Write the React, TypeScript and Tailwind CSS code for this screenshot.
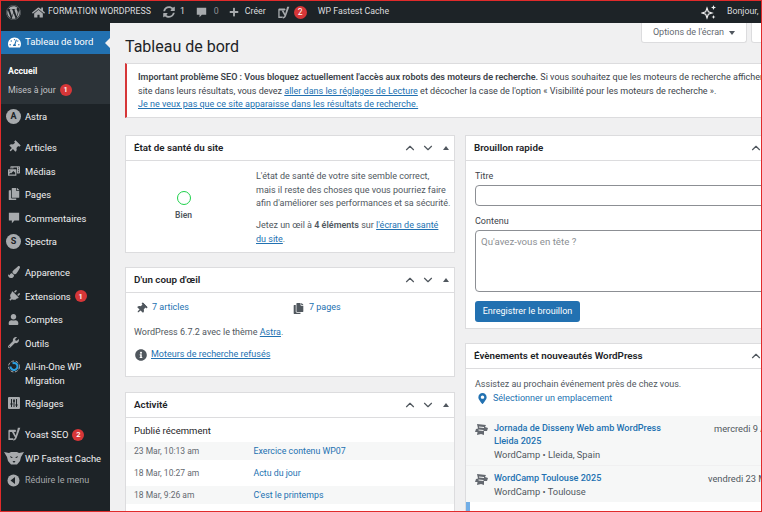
import React from 'react';
import {
  FaWordpress, FaHome, FaSyncAlt, FaPlus, FaTachometerAlt, FaThumbtack, FaCopy,
  FaPaintBrush, FaPlug, FaUser, FaWrench, FaInfoCircle, FaMapMarkerAlt, FaPhotoVideo,
} from 'react-icons/fa';
import { ChevronUp, ChevronDown } from 'lucide-react';

const YoastIcon = ({ size = 16 }: { size?: number }) => (
  <svg width={size} height={size} viewBox="0 0 20 20" fill="#a7aaad" className="shrink-0">
    <path d="M3 4h9l1.500 2-2 1H4v9h5l-.5 2.500H2V5z" />
    <path d="M19 1l-5 14c-1 3-2.500 4-5 4.500V17c1.500-.3 2.200-1 2.500-2L7 7h3l2.500 5L15 3.500 15.500 1z" />
  </svg>
);

const BubbleIcon = ({ size = 12 }: { size?: number }) => (
  <svg width={size} height={size} viewBox="0 0 14 14" fill="#a7aaad" className="shrink-0">
    <path d="M1 1h12v9H7.500L4.500 13v-3H1z" />
  </svg>
);

const StarsIcon = () => (
  <svg width="16" height="16" viewBox="0 0 16 16" fill="none" stroke="#f0f0f1" strokeWidth="1.200" className="shrink-0">
    <path d="M6 4l1.300 3.700L11 9l-3.700 1.300L6 14l-1.300-3.700L1 9l3.700-1.300z" />
    <path d="M12.500 1l.7 1.800L15 3.500l-1.800.7-.7 1.800-.7-1.800L10 3.500l1.800-.7zM12.500 11l.6 1.400 1.400.6-1.400.6-.6 1.400-.6-1.400-1.400-.6 1.400-.6z" fill="#f0f0f1" stroke="none" />
  </svg>
);

const CircleLetter = ({ letter }: { letter: string }) => (
  <span className="flex h-[15px] w-[15px] items-center justify-center rounded-full bg-[#a7aaad] text-[9px] font-bold leading-none text-[#1d2327]">
    {letter}
  </span>
);

const ReglagesIcon = () => (
  <svg width="12" height="12" viewBox="0 0 12 12">
    <rect width="12" height="12" rx="1" fill="#a7aaad" />
    <path d="M3.500 2v8M6 2v8M8.500 2v8" stroke="#1d2327" strokeWidth="1" />
    <path d="M2.500 7h2M5 4h2M7.500 8h2" stroke="#1d2327" strokeWidth="1.500" />
  </svg>
);

const MigrationIcon = () => (
  <svg width="14" height="14" viewBox="0 0 14 14" fill="none">
    <circle cx="7" cy="7.500" r="5.500" stroke="#a7aaad" strokeWidth="1" strokeDasharray="3 1.500" />
    <path d="M3.500 7.500a3.500 3.500 0 1 0 2-3.200" stroke="#2b9fe0" strokeWidth="2" />
  </svg>
);

const TigerIcon = () => (
  <svg width="20" height="14" viewBox="0 0 20 14" fill="#a7aaad">
    <path d="M0 1l5 1 2-1h6l2 1 5-1-3 5-1 4-3 3.500H7L4 10 3 6z" />
    <path d="M6 5l3 1.500-2 .5zM14 5l-3 1.500 2 .5zM8.500 10h3L10 12z" fill="#1d2327" />
  </svg>
);

const CollapseIcon = () => (
  <svg width="13" height="13" viewBox="0 0 13 13">
    <circle cx="6.500" cy="6.500" r="6" fill="#a7aaad" />
    <path d="M8 3v7L3.500 6.500z" fill="#1d2327" />
  </svg>
);

const CampIcon = () => (
  <svg width="13" height="13" viewBox="0 0 13 13" fill="#646970">
    <path d="M2 1l9 1-1 2 3 1-1 3H9v4l-3-1-4 1 .5-3H0l1-3 2-.5z" />
    <path d="M4 4l5 .5M3.500 7l5 .5" stroke="#f6f7f7" strokeWidth="1" />
  </svg>
);

const Badge = ({ n }: { n: number }) => (
  <span className="ml-[4px] flex h-[12px] w-[12px] items-center justify-center rounded-full bg-[#d63638] text-[7.500px] font-semibold leading-none text-white">
    {n}
  </span>
);

const menuGroups = [
  [{ label: 'Astra', icon: <CircleLetter letter="A" /> }],
  [
    { label: 'Articles', icon: <FaThumbtack size={12} className="rotate-45" /> },
    { label: 'Médias', icon: <FaPhotoVideo size={12} /> },
    { label: 'Pages', icon: <FaCopy size={12} /> },
    { label: 'Commentaires', icon: <BubbleIcon /> },
    { label: 'Spectra', icon: <CircleLetter letter="S" /> },
  ],
  [
    { label: 'Apparence', icon: <FaPaintBrush size={12} /> },
    { label: 'Extensions', icon: <FaPlug size={12} className="rotate-45" />, badge: 1 },
    { label: 'Comptes', icon: <FaUser size={11} /> },
    { label: 'Outils', icon: <FaWrench size={11} /> },
    { label: 'All-in-One WP Migration', icon: <MigrationIcon />, tall: true },
    { label: 'Réglages', icon: <ReglagesIcon /> },
  ],
  [
    { label: 'Yoast SEO', icon: <YoastIcon size={14} />, badge: 2 },
    { label: 'WP Fastest Cache', icon: <TigerIcon />, nowrap: true },
  ],
];

const Sidebar = () => (
  <aside className="w-[109px] shrink-0 bg-[#1d2327] pt-[8px] text-[9.400px] text-[#f0f0f1]">
    <div className="relative flex h-[23px] items-center bg-[#2271b1] text-[9.600px] text-white">
      <span className="flex w-[24px] justify-center pl-[2px]"><FaTachometerAlt size={13} /></span>
      <span>Tableau de bord</span>
      <span className="absolute right-0 top-[7px] h-0 w-0 border-y-[5px] border-r-[5px] border-y-transparent border-r-[#f0f0f1]" />
    </div>
    <div className="h-[50px] bg-[#2c3338] pl-[7px] pt-[10px] text-[8.800px]">
      <div className="font-bold leading-[14px] text-white">Accueil</div>
      <div className="mt-[5px] flex items-center leading-[14px] text-[#c3c4c7]">
        Mises à jour<Badge n={1} />
      </div>
    </div>
    {menuGroups.map((group, i) => (
      <div key={i} className="mb-[7.500px]">
        {group.map((item: any) => (
          <div key={item.label} className={`flex items-start ${item.tall ? 'h-[37px]' : 'h-[23.500px]'} pt-[5px]`}>
            <span className="flex h-[14px] w-[24px] shrink-0 items-center justify-center pl-[1px] text-[#a7aaad]">{item.icon}</span>
            <span className={`flex items-center pt-[1px] leading-[13.500px] ${item.nowrap ? 'whitespace-nowrap' : ''} ${item.tall ? 'w-[78px]' : ''}`}>
              {item.label}
              {item.badge ? <Badge n={item.badge} /> : null}
            </span>
          </div>
        ))}
      </div>
    ))}
    <div className="-mt-[7.500px] flex h-[23.500px] items-center text-[9px] text-[#a7aaad]">
      <span className="flex w-[24px] justify-center pl-[1px]"><CollapseIcon /></span>
      Réduire le menu
    </div>
  </aside>
);

const TopBar = () => (
  <header className="flex h-[22px] shrink-0 items-center whitespace-nowrap bg-[#1d2327] pl-[5px] text-[8.800px] text-[#dcdcde]">
    <div className="flex min-w-0 flex-1 items-center [&>svg]:shrink-0">
      <FaWordpress size={15} className="text-[#a7aaad]" />
      <FaHome size={13} className="ml-[11px] text-[#a7aaad]" />
      <span className="ml-[3px]">FORMATION WORDPRESS</span>
      <FaSyncAlt size={12} className="ml-[12px] text-[#a7aaad]" />
      <span className="ml-[5px]">1</span>
      <span className="ml-[11px]"><BubbleIcon size={11} /></span>
      <span className="ml-[7px] text-[#8c8f94]">0</span>
      <FaPlus size={10} className="ml-[10px] text-[#a7aaad]" />
      <span className="ml-[6px]">Créer</span>
      <span className="ml-[11px]"><YoastIcon size={13} /></span>
      <span className="ml-[4px] flex h-[13px] w-[13px] items-center justify-center rounded-full bg-[#d63638] text-[8.500px] text-white">2</span>
      <span className="ml-[11px]">WP Fastest Cache</span>
    </div>
    <div className="flex w-[60px] shrink-0 items-center overflow-hidden">
      <StarsIcon />
      <span className="ml-[10px]">Bonjour,</span>
    </div>
  </header>
);

const Card = ({ title, controls = 3, className = '', children }: { title: string; controls?: number; className?: string; children: React.ReactNode }) => (
  <section className={`border border-[#dcdcde] bg-white ${className}`}>
    <div className={`flex h-[25px] items-center justify-between border-b border-[#dcdcde] pl-[8px] ${controls > 1 ? 'pr-[5px]' : 'pr-[31px]'}`}>
      <h2 className="pt-[1px] text-[9.800px] font-semibold text-[#1d2327]">{title}</h2>
      <div className="flex items-center gap-[3px] text-[#50575e]">
        <ChevronUp size={14} />
        {controls > 1 && <ChevronDown size={14} className="ml-[1px]" />}
        {controls > 1 && <span className="ml-[5px] h-0 w-0 border-x-[3px] border-b-[4px] border-x-transparent border-b-[#50575e]" />}
      </div>
    </div>
    {children}
  </section>
);

const Link = ({ children, className = '' }: { children: React.ReactNode; className?: string }) => (
  <a className={`text-[#2271b1] underline ${className}`}>{children}</a>
);

const Health = () => (
  <Card title="État de santé du site" className="h-[118px]">
    <div className="flex">
      <div className="flex w-[115px] flex-col items-center pt-[30px]">
        <span className="h-[14px] w-[14px] rounded-full border-[1.500px] border-[#1ed14b]" />
        <span className="mt-[4px] text-[8.500px] font-semibold text-[#50575e]">Bien</span>
      </div>
      <div className="ml-[15px] w-[195px] whitespace-nowrap pt-[9px] text-[9px] leading-[13.500px] text-[#50575e]">
        <p>L'état de santé de votre site semble correct,</p>
        <p>mais il reste des choses que vous pourriez faire</p>
        <p>afin d'améliorer ses performances et sa sécurité.</p>
        <p className="mt-[8.500px]">Jetez un œil à <b className="font-semibold">4 éléments</b> sur <Link>l'écran de santé</Link></p>
        <p><Link>du site</Link>.</p>
      </div>
    </div>
  </Card>
);

const Glance = () => (
  <Card title="D'un coup d'œil" className="mt-[14px] h-[110px]">
    <div className="px-[8px] pt-[8px] text-[9px] text-[#50575e]">
      <div className="flex h-[14px] items-center">
        <FaThumbtack size={11} className="ml-[2px] rotate-45 text-[#50575e]" />
        <span className="ml-[5px] w-[141px] text-[#2271b1]">7 articles</span>
        <FaCopy size={11} className="text-[#50575e]" />
        <span className="ml-[5px] text-[#2271b1]">7 pages</span>
      </div>
      <p className="mt-[10px] leading-[14px]">WordPress 6.7.2 avec le thème <Link>Astra</Link>.</p>
      <div className="mt-[9px] flex items-center">
        <FaInfoCircle size={12} className="ml-[1px] text-[#50575e]" />
        <Link className="ml-[4px]">Moteurs de recherche refusés</Link>
      </div>
    </div>
  </Card>
);

const activity = [
  { date: '23 Mar, 10:13 am', title: 'Exercice contenu WP07' },
  { date: '18 Mar, 10:27 am', title: 'Actu du jour' },
  { date: "18 Mar, 9:26 am", title: "C'est le printemps" },
];

const Activity = () => (
  <Card title="Activité" className="mt-[15px] h-[140px]">
    <div className="pt-[5px]">
      <h3 className="h-[19px] pl-[8px] text-[9.500px] leading-[15px] text-[#1d2327]">Publié récemment</h3>
      {activity.map((row, i) => (
        <div key={row.date} className={`mb-[4px] flex h-[18px] items-center pl-[8px] pt-[1px] ${i % 2 === 0 ? 'bg-[#f6f7f7]' : ''}`}>
          <span className="w-[119.500px] text-[8.500px] text-[#646970]">{row.date}</span>
          <span className="text-[8.800px] text-[#2271b1]">{row.title}</span>
        </div>
      ))}
    </div>
  </Card>
);

const QuickDraft = () => (
  <Card title="Brouillon rapide" controls={1} className="h-[194px]">
    <div className="pl-[9px] pr-[8px] pt-[8px] text-[9px] text-[#3c434a]">
      <label className="block leading-[14px]">Titre</label>
      <div className="mt-[2px] h-[21px] rounded-[4px] border border-[#8c8f94] bg-white" />
      <label className="mt-[8px] block leading-[14px]">Contenu</label>
      <div className="mt-[2px] h-[62px] rounded-[4px] border border-[#8c8f94] bg-white px-[5px] py-[4px] text-[9.700px] text-[#8c8f94]">Qu'avez-vous en tête ?</div>
      <button className="mt-[9px] flex h-[21px] w-[105px] items-center justify-center whitespace-nowrap rounded-[3px] bg-[#2271b1] text-[9px] text-white">Enregistrer le brouillon</button>
    </div>
  </Card>
);

const Events = () => (
  <Card title="Évènements et nouveautés WordPress" controls={1} className="mt-[14px] h-[170px]">
    <div className="pl-[9px] pr-[8px] pt-[8px] text-[9px] text-[#50575e]">
      <p className="leading-[14px]">Assistez au prochain événement près de chez vous.</p>
      <div className="flex items-center leading-[14px]">
        <FaMapMarkerAlt size={11} className="ml-[2px] text-[#2271b1]" />
        <span className="ml-[5px] text-[#2271b1]">Sélectionner un emplacement</span>
      </div>
    </div>
    <div className="mt-[11px] text-[9.300px] leading-[13px] text-[#50575e]">
      <div className="flex h-[50px] whitespace-nowrap border-b border-[#f0f0f1] bg-[#f6f7f7] pl-[9px] pt-[6px]">
        <span className="mt-[1px] w-[19px] shrink-0"><CampIcon /></span>
        <div className="w-[220px] shrink-0">
          <div className="text-[9.100px] font-medium text-[#2271b1]">Jornada de Disseny Web amb WordPress</div>
          <div className="text-[9.100px] font-medium text-[#2271b1]">Lleida 2025</div>
          <div>WordCamp • Lleida, Spain</div>
        </div>
        <span>mercredi 9 Avril 2025</span>
      </div>
      <div className="flex h-[36px] whitespace-nowrap bg-[#f6f7f7] pl-[9px] pt-[6px]">
        <span className="mt-[1px] w-[19px] shrink-0"><CampIcon /></span>
        <div className="w-[214px] shrink-0">
          <div className="text-[9.100px] font-medium text-[#2271b1]">WordCamp Toulouse 2025</div>
          <div>WordCamp • Toulouse</div>
        </div>
        <span>vendredi 23 Mai 2025</span>
      </div>
      <div className="h-[12px] border-l-4 border-[#72aee6]" />
    </div>
  </Card>
);

export default function App() {
  return (
    <div className="flex h-[512px] w-[762px] flex-col overflow-hidden border border-[#e02b2b] bg-[#f0f0f1] font-['Roboto',sans-serif]">
      <TopBar />
      <div className="flex min-h-0 flex-1">
        <Sidebar />
        <main className="min-w-0 flex-1 overflow-hidden pl-[15px]">
          <div className="flex h-[20px] pl-[516px]">
            <div className="flex h-[20px] w-[106px] shrink-0 items-center justify-center gap-[5px] rounded-b-[3px] border border-t-0 border-[#dcdcde] bg-white text-[9px] text-[#646970]">
              Options de l'écran
              <span className="h-0 w-0 border-x-[3px] border-t-[4px] border-x-transparent border-t-[#50575e]" />
            </div>
            <div className="ml-[4px] h-[20px] w-[60px] shrink-0 rounded-b-[3px] border border-t-0 border-[#dcdcde] bg-white" />
          </div>
          <h1 className="-mt-[6px] mb-[6px] h-[20px] text-[16px] leading-[20px] text-[#1d2327]">Tableau de bord</h1>
          <div className="h-[55px] w-[700px] whitespace-nowrap border border-l-2 border-[#dcdcde] border-l-[#d63638] bg-white pl-[11px] pt-[7px] text-[9px] leading-[13.500px] text-[#3c434a]">
            <p><b className="font-semibold">Important problème SEO : Vous bloquez actuellement l'accès aux robots des moteurs de recherche.</b> Si vous souhaitez que les moteurs de recherche affichent ce</p>
            <p>site dans leurs résultats, vous devez <Link>aller dans les réglages de Lecture</Link> et décocher la case de l'option « Visibilité pour les moteurs de recherche ».</p>
            <p><Link>Je ne veux pas que ce site apparaisse dans les résultats de recherche.</Link></p>
          </div>
          <div className="mt-[17px] flex items-start">
            <div className="w-[330px] shrink-0">
              <Health />
              <Glance />
              <Activity />
            </div>
            <div className="ml-[10px] w-[330px] shrink-0">
              <QuickDraft />
              <Events />
            </div>
          </div>
        </main>
      </div>
    </div>
  );
}
